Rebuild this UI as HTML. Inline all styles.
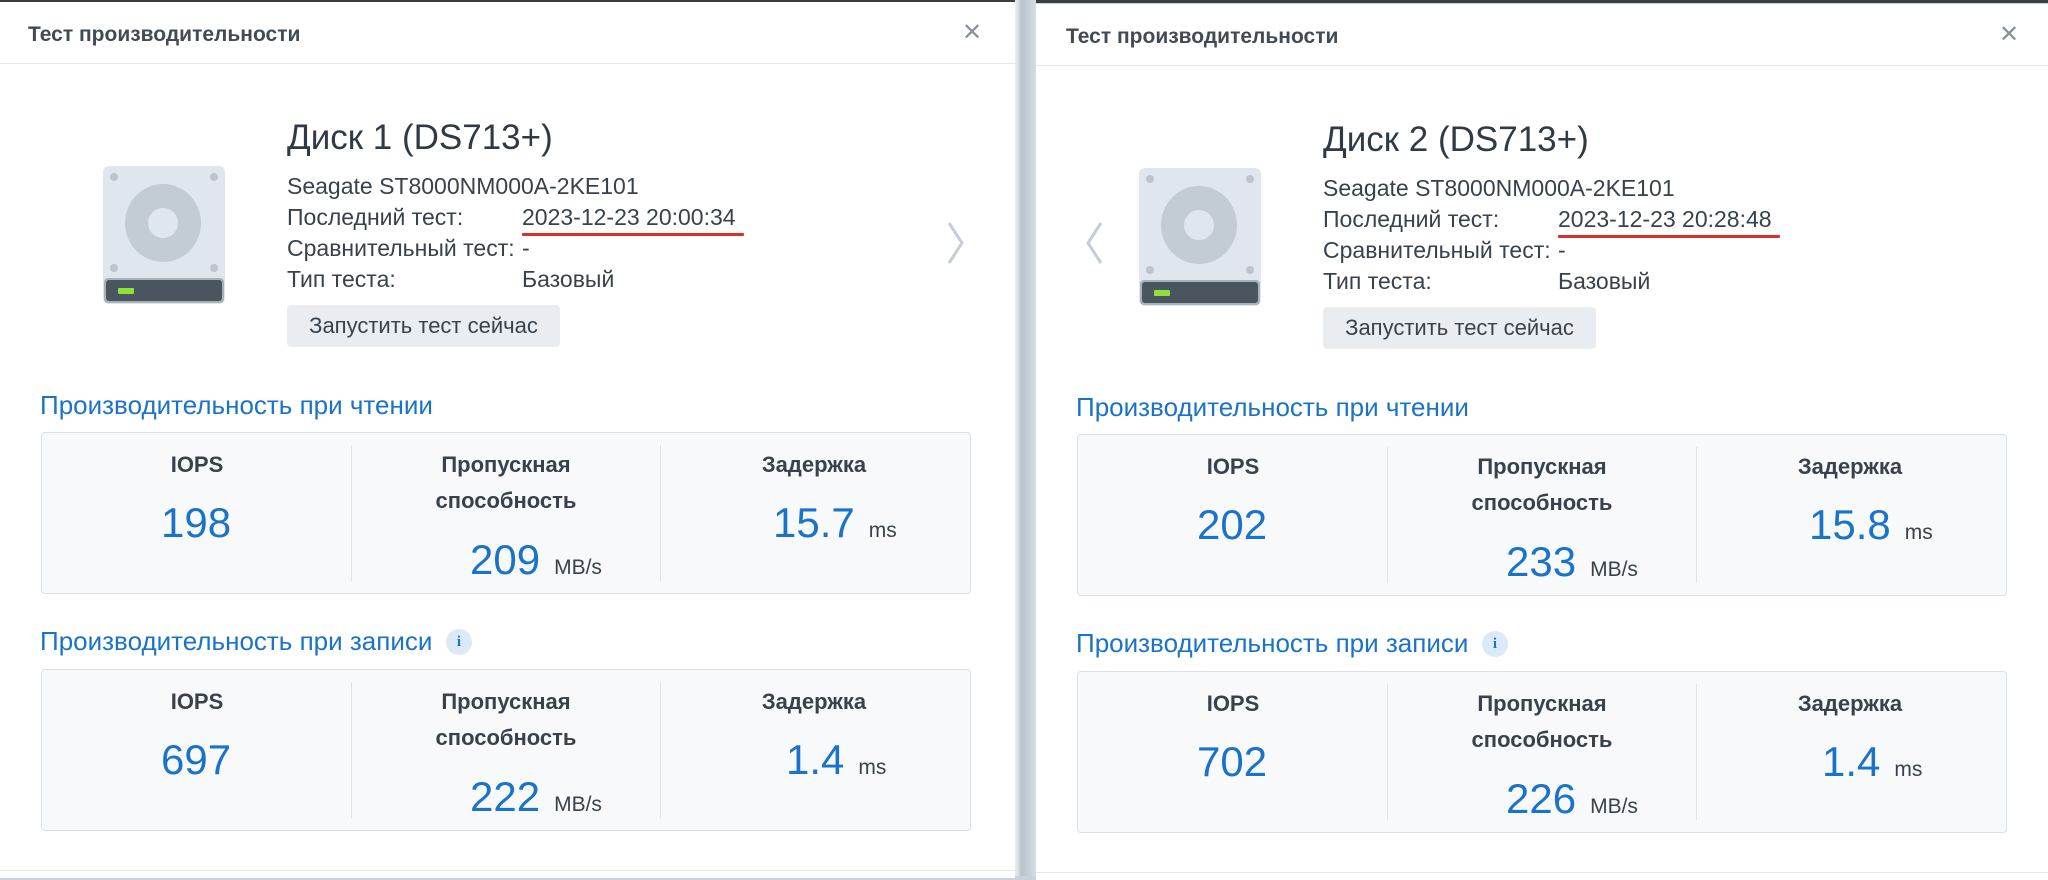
<!DOCTYPE html>
<html><head><meta charset="utf-8">
<style>
*{margin:0;padding:0;box-sizing:border-box}
body{width:2048px;height:876px;overflow:hidden;background:#c9d2db;font-family:"Liberation Sans","Noto Sans CJK SC",sans-serif;position:relative}
.topbar{position:absolute;left:0;top:0;width:2048px;height:3px;background:#3b3d40}
.sep{position:absolute;left:1015px;top:0;width:21px;height:876px;background:linear-gradient(90deg,#e9ecef 0,#dde2e7 3px,#b7c3ce 6px,#c3ccd5 12px,#d6dce2 21px)}
.panel{position:absolute;top:2px;height:876px;background:#fff;overflow:hidden}
.p{position:absolute;white-space:nowrap}
.hdr{left:28px;top:21px;font-size:21px;font-weight:bold;color:#414b55}
.hline{left:0;right:0;top:61px;height:1px;background:#e3e8ed}
.x{top:16px;font-size:24px;color:#8a939c;font-family:"DejaVu Sans",sans-serif}
.h1{left:287px;top:116px;font-size:35px;color:#2f3a44}
.ln{font-size:23px;color:#38424c}
.red{left:522px;top:231px;width:222px;height:3px;background:#d9302c;border-radius:1px}
.btn{left:287px;top:303px;width:273px;height:42px;background:#e9edf2;border-radius:4px;font-size:22px;color:#38424c;text-align:center;line-height:42px}
.sec{left:40px;font-size:26px;color:#1a73c8}
.box{left:41px;width:930px;height:162px;background:#f7f9fb;border:1px solid #d9e0e7;border-radius:4px}
.vs{position:absolute;top:12px;width:1px;height:136px;background:#dde3ea}
.lab{position:absolute;font-size:22px;font-weight:bold;color:#38424c;text-align:center;width:240px;line-height:36px}
.val{position:absolute;font-size:42px;color:#1a73c8;white-space:nowrap}
.unit{font-size:21px;color:#38424c;margin-left:14px}
.info{left:446px;width:26px;height:26px;border-radius:50%;background:#dce9f8;color:#1a73c8;font-size:15px;font-weight:bold;text-align:center;line-height:26px;font-family:"Liberation Serif",serif}
.bot{left:0;right:0;top:868px;height:1px;background:#e3e8ed}
</style></head><body>
<div class="topbar"></div>
<div class="sep"></div>

<!-- LEFT PANEL -->
<div class="panel" style="left:0;width:1015px;">
 <div class="p hdr">Тест производительности</div>
 <div class="p x" style="left:962px">✕</div>
 <div class="p hline"></div>
 <svg class="p" style="left:103px;top:164px" width="123" height="140" viewBox="0 0 123 140">
  <rect x="0" y="0" width="122" height="138" rx="6" fill="#dfe6ee"/>
  <circle cx="11" cy="11" r="4" fill="#bcc5cf"/><circle cx="111" cy="11" r="4" fill="#bcc5cf"/>
  <circle cx="11" cy="102" r="4" fill="#bcc5cf"/><circle cx="111" cy="102" r="4" fill="#bcc5cf"/>
  <ellipse cx="60" cy="57" rx="38" ry="39" fill="#c3cbd3"/>
  <circle cx="60" cy="57" r="15" fill="#dfe6ee"/>
  <rect x="1" y="112" width="120" height="25" rx="4" fill="#a9b1b9"/>
  <rect x="3" y="114" width="116" height="21" rx="3" fill="#4b555f"/>
  <rect x="15" y="122" width="16" height="6" rx="1" fill="#8fe03a"/>
 </svg>
 <div class="p h1">Диск 1 (DS713+)</div>
 <div class="p ln" style="left:287px;top:171px">Seagate ST8000NM000A-2KE101</div>
 <div class="p ln" style="left:287px;top:202px">Последний тест:</div>
 <div class="p ln" style="left:522px;top:202px">2023-12-23 20:00:34</div>
 <div class="p red"></div>
 <div class="p ln" style="left:287px;top:233px">Сравнительный тест:</div>
 <div class="p ln" style="left:522px;top:233px">-</div>
 <div class="p ln" style="left:287px;top:264px">Тип теста:</div>
 <div class="p ln" style="left:522px;top:264px">Базовый</div>
 <div class="p btn">Запустить тест сейчас</div>
 <svg class="p" style="left:944px;top:218px" width="24" height="46"><path d="M5 3 L18 23 L5 43" fill="none" stroke="#c5cdd6" stroke-width="3"/></svg>

 <div class="p sec" style="top:388px">Производительность при чтении</div>
 <div class="p box" style="top:430px">
  <div class="vs" style="left:309px"></div><div class="vs" style="left:618px"></div>
  <div class="lab" style="left:35px;top:14px">IOPS</div>
  <div class="lab" style="left:344px;top:14px">Пропускная<br>способность</div>
  <div class="lab" style="left:652px;top:14px">Задержка</div>
  <div class="val" style="left:119px;top:66px">198</div>
  <div class="val" style="left:428px;top:103px">209<span class="unit">MB/s</span></div>
  <div class="val" style="left:731px;top:66px">15.7<span class="unit">ms</span></div>
 </div>
 <div class="p sec" style="top:624px">Производительность при записи</div>
 <div class="p info" style="top:627px">i</div>
 <div class="p box" style="top:667px">
  <div class="vs" style="left:309px"></div><div class="vs" style="left:618px"></div>
  <div class="lab" style="left:35px;top:14px">IOPS</div>
  <div class="lab" style="left:344px;top:14px">Пропускная<br>способность</div>
  <div class="lab" style="left:652px;top:14px">Задержка</div>
  <div class="val" style="left:119px;top:66px">697</div>
  <div class="val" style="left:428px;top:103px">222<span class="unit">MB/s</span></div>
  <div class="val" style="left:744px;top:66px">1.4<span class="unit">ms</span></div>
 </div>
 <div class="p bot"></div>
</div>

<!-- RIGHT PANEL -->
<div class="panel" style="left:1036px;width:1012px;top:4px">
 <div class="p hdr" style="left:30px">Тест производительности</div>
 <div class="p x" style="left:963px">✕</div>
 <div class="p hline"></div>
 <svg class="p" style="left:103px;top:164px" width="123" height="140" viewBox="0 0 123 140">
  <rect x="0" y="0" width="122" height="138" rx="6" fill="#dfe6ee"/>
  <circle cx="11" cy="11" r="4" fill="#bcc5cf"/><circle cx="111" cy="11" r="4" fill="#bcc5cf"/>
  <circle cx="11" cy="102" r="4" fill="#bcc5cf"/><circle cx="111" cy="102" r="4" fill="#bcc5cf"/>
  <ellipse cx="60" cy="57" rx="38" ry="39" fill="#c3cbd3"/>
  <circle cx="60" cy="57" r="15" fill="#dfe6ee"/>
  <rect x="1" y="112" width="120" height="25" rx="4" fill="#a9b1b9"/>
  <rect x="3" y="114" width="116" height="21" rx="3" fill="#4b555f"/>
  <rect x="15" y="122" width="16" height="6" rx="1" fill="#8fe03a"/>
 </svg>
 <svg class="p" style="left:46px;top:216px" width="24" height="46"><path d="M19 3 L6 23 L19 43" fill="none" stroke="#c5cdd6" stroke-width="3"/></svg>
 <div class="p h1">Диск 2 (DS713+)</div>
 <div class="p ln" style="left:287px;top:171px">Seagate ST8000NM000A-2KE101</div>
 <div class="p ln" style="left:287px;top:202px">Последний тест:</div>
 <div class="p ln" style="left:522px;top:202px">2023-12-23 20:28:48</div>
 <div class="p red"></div>
 <div class="p ln" style="left:287px;top:233px">Сравнительный тест:</div>
 <div class="p ln" style="left:522px;top:233px">-</div>
 <div class="p ln" style="left:287px;top:264px">Тип теста:</div>
 <div class="p ln" style="left:522px;top:264px">Базовый</div>
 <div class="p btn">Запустить тест сейчас</div>

 <div class="p sec" style="top:388px">Производительность при чтении</div>
 <div class="p box" style="top:430px">
  <div class="vs" style="left:309px"></div><div class="vs" style="left:618px"></div>
  <div class="lab" style="left:35px;top:14px">IOPS</div>
  <div class="lab" style="left:344px;top:14px">Пропускная<br>способность</div>
  <div class="lab" style="left:652px;top:14px">Задержка</div>
  <div class="val" style="left:119px;top:66px">202</div>
  <div class="val" style="left:428px;top:103px">233<span class="unit">MB/s</span></div>
  <div class="val" style="left:731px;top:66px">15.8<span class="unit">ms</span></div>
 </div>
 <div class="p sec" style="top:624px">Производительность при записи</div>
 <div class="p info" style="top:627px">i</div>
 <div class="p box" style="top:667px">
  <div class="vs" style="left:309px"></div><div class="vs" style="left:618px"></div>
  <div class="lab" style="left:35px;top:14px">IOPS</div>
  <div class="lab" style="left:344px;top:14px">Пропускная<br>способность</div>
  <div class="lab" style="left:652px;top:14px">Задержка</div>
  <div class="val" style="left:119px;top:66px">702</div>
  <div class="val" style="left:428px;top:103px">226<span class="unit">MB/s</span></div>
  <div class="val" style="left:744px;top:66px">1.4<span class="unit">ms</span></div>
 </div>
 <div class="p bot"></div>
</div>
</body></html>
